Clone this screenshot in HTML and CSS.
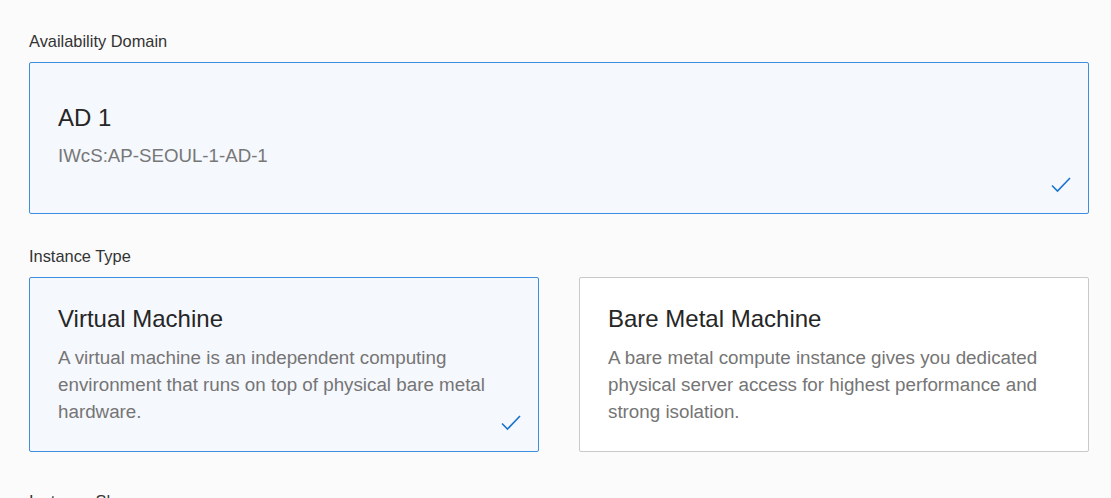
FILE: index.html
```html
<!DOCTYPE html>
<html>
<head>
<meta charset="utf-8">
<link rel="stylesheet" href="styles.css">
</head>
<body>
<div class="page">
  <section class="field">
    <div class="label">Availability Domain</div>
    <div class="card card-ad selected">
      <div class="card-title">AD 1</div>
      <div class="card-sub">IWcS:AP-SEOUL-1-AD-1</div>
      <svg class="check" width="22" height="18" viewBox="0 0 22 18"><path d="M2 9.5 L7.5 15 L20 2" fill="none" stroke="#1a73d0" stroke-width="1.6"/></svg>
    </div>
  </section>
  <section class="field field-type">
    <div class="label">Instance Type</div>
    <div class="card-row">
      <div class="card card-type selected">
        <div class="card-title">Virtual Machine</div>
        <div class="card-desc">A virtual machine is an independent computing environment that runs on top of physical bare metal hardware.</div>
        <svg class="check" width="22" height="18" viewBox="0 0 22 18"><path d="M2 9.5 L7.5 15 L20 2" fill="none" stroke="#1a73d0" stroke-width="1.6"/></svg>
      </div>
      <div class="card card-type">
        <div class="card-title">Bare Metal Machine</div>
        <div class="card-desc">A bare metal compute instance gives you dedicated physical server access for highest performance and strong isolation.</div>
      </div>
    </div>
  </section>
  <section class="field">
    <div class="label">Instance Shape</div>
  </section>
</div>
</body>
</html>
```
FILE: styles.css
```css
html, body {
  margin: 0;
  padding: 0;
  background: #fbfbfb;
}
body {
  font-family: "Liberation Sans", Arial, sans-serif;
  color: #333;
}
.page {
  padding: 29px 22px 0 29px;
}
.field {
  margin-bottom: 30px;
}
.field-type {
  margin-bottom: 37px;
}
.label {
  font-size: 16.4px;
  line-height: 24px;
  color: #333;
  margin-bottom: 9px;
}
.card {
  position: relative;
  box-sizing: border-box;
  border: 1px solid #c9c9c9;
  border-radius: 2px;
  background: #fff;
}
.card.selected {
  border-color: #3d8ee0;
  background: #f5f8fd;
}
.card-ad {
  height: 152px;
  padding: 41px 28px 0 28px;
}
.card-title {
  font-size: 24px;
  line-height: 28px;
  color: #262626;
}
.card-ad .card-sub {
  margin-top: 12px;
  font-size: 18.7px;
  line-height: 24px;
  color: #777;
}
.card-row {
  display: flex;
  gap: 40px;
}
.card-type {
  flex: 1;
  height: 175px;
  padding: 27px 28px 0 28px;
}
.card-desc {
  margin-top: 11px;
  font-size: 18.8px;
  line-height: 27px;
  color: #757575;
}
.check {
  position: absolute;
  right: 16px;
  bottom: 19px;
}
```
